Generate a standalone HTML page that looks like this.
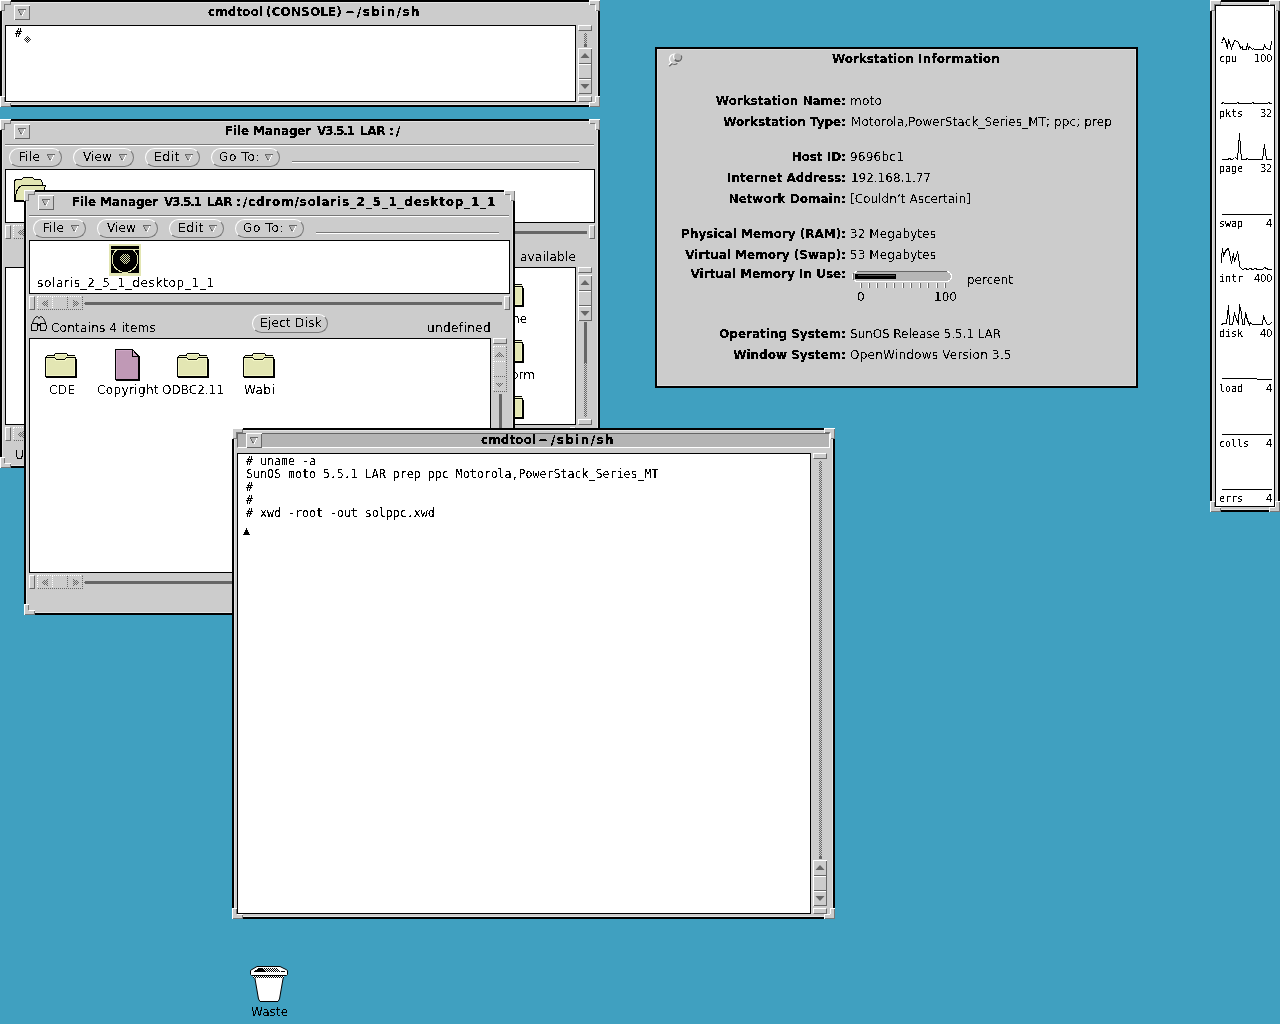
<!DOCTYPE html>
<html lang="en"><head><meta charset="utf-8"><title>OpenWindows desktop</title>
<style>
html,body{margin:0;padding:0}
body{width:1280px;height:1024px;overflow:hidden;position:relative;background:#40a0c0;font-family:"DejaVu Sans","Liberation Sans",sans-serif;font-size:12px;color:#000}
.abs,.t,.rc,.wbtn,.win,.pane,.raised,.mbtn,.sep,.act,.popup,.cable,.cable0,.elev,.elevd,.dcur{position:absolute}
.win{background:#ccc;box-shadow:inset 0 0 0 2px #000,inset 0 0 0 3px #e4e4e4;overflow:hidden}
.popup{background:#ccc;box-shadow:inset 0 0 0 2px #000,inset 0 0 0 3px #dcdcdc;overflow:hidden}
.wbtn{left:14px;top:5px}
.act{background:#b4b4b4;box-sizing:border-box;border:1px solid;border-color:#666 #fff #fff #666}
.pane{background:#fff;border:1px solid #000;overflow:hidden}
.raised{background:#ccc;box-sizing:border-box;border:1px solid;border-color:#fff #666 #666 #fff}
.mbtn{background:#ccc;border:1px solid;border-color:#fff #777 #777 #fff;border-radius:10px}
.sep{height:0;border-top:1px solid #777;border-bottom:1px solid #fff}
.t{white-space:pre;line-height:14px;font-size:12px;filter:url(#th)}
.t.b{font-weight:bold;filter:url(#thb)}
.t.m{font-family:"DejaVu Sans Mono","Liberation Mono",monospace;font-size:11.627px;line-height:13px;filter:url(#thm)}
.t.p{font-family:"DejaVu Sans Mono","Liberation Mono",monospace;font-size:9.966px;line-height:12px;filter:url(#thb)}
.t.pn{font-size:10px;line-height:12px;letter-spacing:-0.36px}
.t.r{text-align:right}
.cable{background:repeating-conic-gradient(#666 0 25%,#ccc 0 50%) 0 0/2px 2px}
.cable0{background:#666}
.elevd{box-sizing:border-box;border:1px dotted;border-color:#fff #666 #666 #fff;background:#ccc}
.dcur{width:7px;height:7px;background:repeating-conic-gradient(#000 0 25%,#fff 0 50%) 0 0/2px 2px;clip-path:polygon(50% 0,100% 50%,50% 100%,0 50%)}
svg{shape-rendering:crispEdges;overflow:visible}
</style></head>
<body>
<svg width="0" height="0" style="position:absolute"><defs><filter id="th" x="0" y="0" width="100%" height="100%" color-interpolation-filters="sRGB"><feComponentTransfer><feFuncA type="discrete" tableValues="0 0 0 1 1 1"/></feComponentTransfer></filter><filter id="thb" x="0" y="0" width="100%" height="100%" color-interpolation-filters="sRGB"><feComponentTransfer><feFuncA type="discrete" tableValues="0 0 1 1 1"/></feComponentTransfer></filter><filter id="thm" x="0" y="0" width="100%" height="100%" color-interpolation-filters="sRGB"><feComponentTransfer><feFuncA type="discrete" tableValues="0 0 0 0 0 0 0 0 0 1 1 1 1 1 1 1 1 1 1 1"/></feComponentTransfer></filter><pattern id="dg" width="2" height="2" patternUnits="userSpaceOnUse"><rect width="1" height="1" fill="#666"/><rect x="1" y="1" width="1" height="1" fill="#666"/></pattern></defs></svg>
<div class="win" style="left:0px;top:0px;width:600px;height:107px;z-index:1"><svg class="wbtn" width="16" height="15"><rect width="16" height="15" fill="#ccc"/><path d="M0.5 15V0.5H16" stroke="#fff" fill="none"/><path d="M15.5 1V14.5H1" stroke="#666" fill="none"/><path d="M4 4.5H11L7.5 10.5Z" fill="#b4b4b4"/><path d="M4 4.5H11.5M4.5 5L7.5 10.5" stroke="#666" fill="none"/><path d="M11 5.5L8 10.5" stroke="#fff" fill="none"/></svg><span id="t1" class="t b" style="left:208.00px;top:5px;letter-spacing:0.065px;">cmdtool</span><span id="t2" class="t b" style="left:266.00px;top:5px;letter-spacing:0.144px;">(CONSOLE)</span><span id="t3" class="t b" style="left:345.00px;top:5px;letter-spacing:-2.062px;">−</span><span id="t4" class="t b" style="left:357.00px;top:5px;letter-spacing:1.399px;">/sbin/sh</span><div class="pane" style="left:5px;top:25px;width:569px;height:75px;"><span id="t0" class="t m" style="left:9.00px;top:1px;">#</span><div class="dcur" style="left:18px;top:10px"></div></div><div class="abs" style="left:578px;top:25px;width:14px;height:77px"><div class="raised" style="left:0px;top:0px;width:14px;height:6px;"></div><div class="raised" style="left:0px;top:71px;width:14px;height:6px;"></div><div class="cable" style="left:6px;top:8px;width:3px;height:11px"></div><div class="abs" style="left:6px;top:19px;width:3px;height:3px;background:#666"></div><div class="elev" style="left:0;top:23px;width:14px;height:46px"><svg width="14" height="46" style="position:absolute;left:0;top:0"><rect width="14" height="46" fill="#ccc"/><path d="M0.5 46V0.5H14M1 16.5H13M1 31.5H13" stroke="#fff" fill="none"/><path d="M13.5 1V45.5H1M1 15.5H13M1 30.5H13" stroke="#666" fill="none"/><path d="M2.5 10H11.5L7 5Z" fill="#666" shape-rendering="auto"/><path d="M2.5 36H11.5L7 41Z" fill="#666" shape-rendering="auto"/></svg></div></div><svg class="rc" style="left:0;top:0" width="11" height="11"><path d="M0 0H11V5H5V11H0Z" fill="#ccc"/><path d="M0.5 11V0.5H11" stroke="#fff" fill="none"/><path d="M10.5 1V4.5H4.5V10.5H1" stroke="#777" fill="none"/></svg><svg class="rc" style="right:0;top:0" width="11" height="11"><path d="M0 0H11V11H6V5H0Z" fill="#ccc"/><path d="M0.5 5V0.5H11M6.5 5V11" stroke="#fff" fill="none"/><path d="M1 4.5H6M10.5 1V10.5H7" stroke="#777" fill="none"/></svg><svg class="rc" style="left:0;bottom:0" width="11" height="11"><path d="M0 0H5V6H11V11H0Z" fill="#ccc"/><path d="M0.5 11V0.5H5M5 6.5H11" stroke="#fff" fill="none"/><path d="M4.5 1V6M10.5 7V10.5H1" stroke="#777" fill="none"/></svg><svg class="rc" style="right:0;bottom:0" width="11" height="11"><path d="M6 0H11V11H0V6H6Z" fill="#ccc"/><path d="M6.5 6V0.5H11M0.5 11V6.5H6" stroke="#fff" fill="none"/><path d="M10.5 1V10.5H1" stroke="#777" fill="none"/></svg></div>
<div class="win" style="left:0px;top:119px;width:600px;height:349px;z-index:2"><svg class="wbtn" width="16" height="15"><rect width="16" height="15" fill="#ccc"/><path d="M0.5 15V0.5H16" stroke="#fff" fill="none"/><path d="M15.5 1V14.5H1" stroke="#666" fill="none"/><path d="M4 4.5H11L7.5 10.5Z" fill="#b4b4b4"/><path d="M4 4.5H11.5M4.5 5L7.5 10.5" stroke="#666" fill="none"/><path d="M11 5.5L8 10.5" stroke="#fff" fill="none"/></svg><span id="t13" class="t b" style="left:225.00px;top:5px;letter-spacing:-0.141px;">File</span><span id="t14" class="t b" style="left:253.00px;top:5px;letter-spacing:-0.190px;">Manager</span><span id="t15" class="t b" style="left:317.00px;top:5px;letter-spacing:-1.089px;">V3.5.1</span><span id="t16" class="t b" style="left:360.00px;top:5px;letter-spacing:-0.396px;">LAR</span><span id="t17" class="t b" style="left:389.00px;top:5px;letter-spacing:-0.812px;">:</span><span id="t18" class="t b" style="left:396.00px;top:5px;letter-spacing:3.609px;">/</span><div class="sep" style="left:5px;top:25px;width:589px"></div><div class="mbtn" style="left:9px;top:29px;width:51px;height:17px"><span id="t9" class="t s" style="left:9.00px;top:1px;letter-spacing:0.277px;">File</span><svg width="8" height="8" style="position:absolute;right:6px;top:5px"><path d="M0.5 0.5H7L3.75 6.5Z" fill="#b4b4b4"/><path d="M0 0.5H7.5M0.5 1L3.5 6.5" stroke="#666" fill="none"/><path d="M7 1.5L4 6.5" stroke="#fff" fill="none"/></svg></div><div class="mbtn" style="left:73px;top:29px;width:59px;height:17px"><span id="t10" class="t s" style="left:9.00px;top:1px;letter-spacing:0.129px;">View</span><svg width="8" height="8" style="position:absolute;right:6px;top:5px"><path d="M0.5 0.5H7L3.75 6.5Z" fill="#b4b4b4"/><path d="M0 0.5H7.5M0.5 1L3.5 6.5" stroke="#666" fill="none"/><path d="M7 1.5L4 6.5" stroke="#fff" fill="none"/></svg></div><div class="mbtn" style="left:145px;top:29px;width:53px;height:17px"><span id="t11" class="t s" style="left:8.00px;top:1px;letter-spacing:0.738px;">Edit</span><svg width="8" height="8" style="position:absolute;right:6px;top:5px"><path d="M0.5 0.5H7L3.75 6.5Z" fill="#b4b4b4"/><path d="M0 0.5H7.5M0.5 1L3.5 6.5" stroke="#666" fill="none"/><path d="M7 1.5L4 6.5" stroke="#fff" fill="none"/></svg></div><div class="mbtn" style="left:211px;top:29px;width:67px;height:17px"><span id="t12" class="t s" style="left:7.00px;top:1px;letter-spacing:0.670px;">Go To:</span><svg width="8" height="8" style="position:absolute;right:6px;top:5px"><path d="M0.5 0.5H7L3.75 6.5Z" fill="#b4b4b4"/><path d="M0 0.5H7.5M0.5 1L3.5 6.5" stroke="#666" fill="none"/><path d="M7 1.5L4 6.5" stroke="#fff" fill="none"/></svg></div><div class="sep" style="left:292px;top:42px;width:287px"></div><div class="pane" style="left:5px;top:50px;width:588px;height:52px;"><svg class="abs" style="left:8px;top:7px" width="32" height="25" viewBox="0 0 32 25"><path d="M0.5 24V4L2 2.5H7.5L9.5 0.5H18.5L20.5 2.5H26.5L28.5 5.5V9H6Z" fill="#e3e6b3" stroke="#000"/><path d="M7.5 8.5H31.5L27 24H1C1.5 14 4 10 7.5 8.5Z" fill="#e3e6b3" stroke="#000"/><path d="M0 24H27" stroke="#000" stroke-width="2"/></svg></div><div class="abs" style="left:5px;top:106px;width:590px;height:14px"><div class="raised" style="left:0px;top:0px;width:6px;height:14px;"></div><div class="raised" style="left:584px;top:0px;width:6px;height:14px;"></div><div class="elevd" style="left:8px;top:0;width:46px;height:14px"><svg width="46" height="14" style="position:absolute;left:-1px;top:-1px"><path d="M15.5 1V13" stroke="#fff" stroke-dasharray="1 1"/><path d="M30.5 1V13" stroke="#666" stroke-dasharray="1 1"/><path d="M11 2.5L5 7.5L11 12.5Z" fill="url(#dg)"/><path d="M36 2.500L42 7.500L36 12.500Z" fill="url(#dg)"/></svg></div><div class="abs" style="left:56px;top:6px;width:526px;height:3px;background:#666"></div><div class="abs" style="left:55px;top:7px;width:1px;height:1px;background:#666"></div></div><span id="t5" class="t s" style="left:520.00px;top:131px;letter-spacing:0.205px;">available</span><div class="pane" style="left:5px;top:148px;width:569px;height:156px;"><svg class="abs" style="left:486px;top:14px" width="32" height="25" viewBox="0 0 32 25"><path d="M1 24.5H32M31.5 6V25" stroke="#000" fill="none"/><path d="M0.5 5L2.5 2.5H9.5L10.5 0.5H21.5L22.5 2.5H29.5L30.5 5V23.5H0.5Z" fill="#e3e6b3" stroke="#000"/><path d="M2 3.5H10L11 1.5H21L22 3.5H30M1.5 6V22.5H29.5V6" stroke="#f3f6c6" fill="none"/><path d="M1 4.5H9.5L11.500 6.5H19.5L21.5 4.5H30" stroke="#000" fill="none"/><path d="M2 5.5H9L11 7.500H20L22 5.5H29" stroke="#f3f6c6" fill="none"/></svg><svg class="abs" style="left:486px;top:70px" width="32" height="25" viewBox="0 0 32 25"><path d="M1 24.5H32M31.5 6V25" stroke="#000" fill="none"/><path d="M0.5 5L2.5 2.5H9.5L10.5 0.5H21.5L22.5 2.5H29.5L30.5 5V23.5H0.5Z" fill="#e3e6b3" stroke="#000"/><path d="M2 3.5H10L11 1.5H21L22 3.5H30M1.5 6V22.5H29.5V6" stroke="#f3f6c6" fill="none"/><path d="M1 4.5H9.5L11.500 6.5H19.5L21.5 4.5H30" stroke="#000" fill="none"/><path d="M2 5.5H9L11 7.500H20L22 5.5H29" stroke="#f3f6c6" fill="none"/></svg><svg class="abs" style="left:486px;top:126px" width="32" height="25" viewBox="0 0 32 25"><path d="M1 24.5H32M31.5 6V25" stroke="#000" fill="none"/><path d="M0.5 5L2.5 2.5H9.5L10.5 0.5H21.5L22.5 2.5H29.5L30.5 5V23.5H0.5Z" fill="#e3e6b3" stroke="#000"/><path d="M2 3.5H10L11 1.5H21L22 3.5H30M1.5 6V22.5H29.5V6" stroke="#f3f6c6" fill="none"/><path d="M1 4.5H9.5L11.500 6.5H19.5L21.5 4.5H30" stroke="#000" fill="none"/><path d="M2 5.5H9L11 7.500H20L22 5.5H29" stroke="#f3f6c6" fill="none"/></svg><span id="t6" class="t s" style="left:487.00px;top:44px;">home</span><span id="t7" class="t s" style="left:478.00px;top:100px;">platform</span></div><div class="abs" style="left:578px;top:148px;width:14px;height:158px"><div class="raised" style="left:0px;top:0px;width:14px;height:6px;"></div><div class="raised" style="left:0px;top:152px;width:14px;height:6px;"></div><div class="cable" style="left:6px;top:55px;width:3px;height:95px"></div><div class="abs" style="left:6px;top:55px;width:3px;height:41px;background:#666"></div><div class="elev" style="left:0;top:8px;width:14px;height:46px"><svg width="14" height="46" style="position:absolute;left:0;top:0"><rect width="14" height="46" fill="#ccc"/><path d="M0.5 46V0.5H14M1 16.5H13M1 31.5H13" stroke="#fff" fill="none"/><path d="M13.5 1V45.5H1M1 15.5H13M1 30.5H13" stroke="#666" fill="none"/><path d="M2.5 10H11.5L7 5Z" fill="#666" shape-rendering="auto"/><path d="M2.5 36H11.5L7 41Z" fill="#666" shape-rendering="auto"/></svg></div></div><div class="abs" style="left:5px;top:308px;width:571px;height:14px"><div class="raised" style="left:0px;top:0px;width:6px;height:14px;"></div><div class="raised" style="left:565px;top:0px;width:6px;height:14px;"></div><div class="elevd" style="left:8px;top:0;width:46px;height:14px"><svg width="46" height="14" style="position:absolute;left:-1px;top:-1px"><path d="M15.5 1V13" stroke="#fff" stroke-dasharray="1 1"/><path d="M30.5 1V13" stroke="#666" stroke-dasharray="1 1"/><path d="M11 2.5L5 7.5L11 12.5Z" fill="url(#dg)"/><path d="M36 2.500L42 7.500L36 12.500Z" fill="url(#dg)"/></svg></div><div class="abs" style="left:56px;top:6px;width:507px;height:3px;background:#666"></div><div class="abs" style="left:55px;top:7px;width:1px;height:1px;background:#666"></div></div><span id="t8" class="t s" style="left:15.00px;top:329px;">Used</span><svg class="rc" style="left:0;top:0" width="11" height="11"><path d="M0 0H11V5H5V11H0Z" fill="#ccc"/><path d="M0.5 11V0.5H11" stroke="#fff" fill="none"/><path d="M10.5 1V4.5H4.5V10.5H1" stroke="#777" fill="none"/></svg><svg class="rc" style="right:0;top:0" width="11" height="11"><path d="M0 0H11V11H6V5H0Z" fill="#ccc"/><path d="M0.5 5V0.5H11M6.5 5V11" stroke="#fff" fill="none"/><path d="M1 4.5H6M10.5 1V10.5H7" stroke="#777" fill="none"/></svg><svg class="rc" style="left:0;bottom:0" width="11" height="11"><path d="M0 0H5V6H11V11H0Z" fill="#ccc"/><path d="M0.5 11V0.5H5M5 6.5H11" stroke="#fff" fill="none"/><path d="M4.5 1V6M10.5 7V10.5H1" stroke="#777" fill="none"/></svg><svg class="rc" style="right:0;bottom:0" width="11" height="11"><path d="M6 0H11V11H0V6H6Z" fill="#ccc"/><path d="M6.5 6V0.5H11M0.5 11V6.5H6" stroke="#fff" fill="none"/><path d="M10.5 1V10.5H1" stroke="#777" fill="none"/></svg></div>
<div class="win" style="left:24px;top:190px;width:491px;height:425px;z-index:3"><svg class="wbtn" width="16" height="15"><rect width="16" height="15" fill="#ccc"/><path d="M0.5 15V0.5H16" stroke="#fff" fill="none"/><path d="M15.5 1V14.5H1" stroke="#666" fill="none"/><path d="M4 4.5H11L7.5 10.5Z" fill="#b4b4b4"/><path d="M4 4.5H11.5M4.5 5L7.5 10.5" stroke="#666" fill="none"/><path d="M11 5.5L8 10.5" stroke="#fff" fill="none"/></svg><span id="t31" class="t b" style="left:48.00px;top:5px;letter-spacing:-0.141px;">File</span><span id="t32" class="t b" style="left:76.00px;top:5px;letter-spacing:-0.190px;">Manager</span><span id="t33" class="t b" style="left:140.00px;top:5px;letter-spacing:-1.089px;">V3.5.1</span><span id="t34" class="t b" style="left:183.00px;top:5px;letter-spacing:-0.396px;">LAR</span><span id="t35" class="t b" style="left:212.00px;top:5px;letter-spacing:-0.812px;">:</span><span id="t36" class="t b" style="left:219.00px;top:5px;letter-spacing:0.779px;">/cdrom/solaris_2_5_1_desktop_1_1</span><div class="sep" style="left:5px;top:25px;width:480px"></div><div class="mbtn" style="left:9px;top:29px;width:51px;height:17px"><span id="t27" class="t s" style="left:9.00px;top:1px;letter-spacing:0.277px;">File</span><svg width="8" height="8" style="position:absolute;right:6px;top:5px"><path d="M0.5 0.5H7L3.75 6.5Z" fill="#b4b4b4"/><path d="M0 0.5H7.5M0.5 1L3.5 6.5" stroke="#666" fill="none"/><path d="M7 1.5L4 6.5" stroke="#fff" fill="none"/></svg></div><div class="mbtn" style="left:73px;top:29px;width:59px;height:17px"><span id="t28" class="t s" style="left:9.00px;top:1px;letter-spacing:0.129px;">View</span><svg width="8" height="8" style="position:absolute;right:6px;top:5px"><path d="M0.5 0.5H7L3.75 6.5Z" fill="#b4b4b4"/><path d="M0 0.5H7.5M0.5 1L3.5 6.5" stroke="#666" fill="none"/><path d="M7 1.5L4 6.5" stroke="#fff" fill="none"/></svg></div><div class="mbtn" style="left:145px;top:29px;width:53px;height:17px"><span id="t29" class="t s" style="left:8.00px;top:1px;letter-spacing:0.738px;">Edit</span><svg width="8" height="8" style="position:absolute;right:6px;top:5px"><path d="M0.5 0.5H7L3.75 6.5Z" fill="#b4b4b4"/><path d="M0 0.5H7.5M0.5 1L3.5 6.5" stroke="#666" fill="none"/><path d="M7 1.5L4 6.5" stroke="#fff" fill="none"/></svg></div><div class="mbtn" style="left:211px;top:29px;width:67px;height:17px"><span id="t30" class="t s" style="left:7.00px;top:1px;letter-spacing:0.670px;">Go To:</span><svg width="8" height="8" style="position:absolute;right:6px;top:5px"><path d="M0.5 0.5H7L3.75 6.5Z" fill="#b4b4b4"/><path d="M0 0.5H7.5M0.5 1L3.5 6.5" stroke="#666" fill="none"/><path d="M7 1.5L4 6.5" stroke="#fff" fill="none"/></svg></div><div class="sep" style="left:292px;top:42px;width:183px"></div><div class="pane" style="left:5px;top:50px;width:479px;height:52px;"><svg class="abs" style="left:79px;top:3px" width="32" height="32" viewBox="0 0 32 32"><defs><pattern id="dz" width="2" height="2" patternUnits="userSpaceOnUse"><rect width="2" height="2" fill="#000"/><rect width="1" height="1" fill="#e3e6b3"/><rect x="1" y="1" width="1" height="1" fill="#e3e6b3"/></pattern><clipPath id="cdc"><rect x="2" y="6" width="28" height="23"/></clipPath></defs><rect width="32" height="32" fill="#e3e6b3"/><rect x="2" y="2" width="28" height="27" fill="#000"/><path d="M2 5.5H30" stroke="#e3e6b3"/><circle cx="16" cy="15.5" r="12.800" fill="none" stroke="#e3e6b3" stroke-width="1" clip-path="url(#cdc)"/><path d="M14 10H18L21 13V17L18 20H14L11 17V13Z" fill="url(#dz)"/></svg><span id="t19" class="t s" style="left:7.00px;top:35px;letter-spacing:0.681px;">solaris_2_5_1_desktop_1_1</span></div><div class="abs" style="left:5px;top:106px;width:481px;height:14px"><div class="raised" style="left:0px;top:0px;width:6px;height:14px;"></div><div class="raised" style="left:475px;top:0px;width:6px;height:14px;"></div><div class="elevd" style="left:8px;top:0;width:46px;height:14px"><svg width="46" height="14" style="position:absolute;left:-1px;top:-1px"><path d="M15.5 1V13" stroke="#fff" stroke-dasharray="1 1"/><path d="M30.5 1V13" stroke="#666" stroke-dasharray="1 1"/><path d="M11 2.5L5 7.5L11 12.5Z" fill="url(#dg)"/><path d="M36 2.500L42 7.500L36 12.500Z" fill="url(#dg)"/></svg></div><div class="abs" style="left:56px;top:6px;width:417px;height:3px;background:#666"></div><div class="abs" style="left:55px;top:7px;width:1px;height:1px;background:#666"></div></div><svg class="abs" style="left:7px;top:126px" width="16" height="15" viewBox="0 0 16 15"><path d="M1.5 7L2.500 4.500L3.500 2.500L5 1L6.500 0.500L7.500 1.500L8 2.500L8.500 1.500L9.500 0.500L11 1L12.500 2.500L13.500 4.500L14.500 7" stroke="#000" fill="none" shape-rendering="auto"/><rect x="0.5" y="7.500" width="6" height="7" rx="1.500" fill="none" stroke="#000"/><rect x="9" y="7.500" width="6" height="7" rx="1.500" fill="none" stroke="#000"/><rect x="6.5" y="8" width="3" height="2" fill="#000"/></svg><span id="t20" class="t s" style="left:27.00px;top:131px;letter-spacing:0.235px;">Contains 4 items</span><div class="mbtn" style="left:228px;top:124px;width:74px;height:17px"><span id="t21" class="t s" style="left:7.00px;top:1px;letter-spacing:0.280px;">Eject Disk</span></div><span id="t22" class="t s" style="left:403.00px;top:131px;letter-spacing:0.404px;">undefined</span><div class="pane" style="left:5px;top:148px;width:460px;height:233px;"><svg class="abs" style="left:15px;top:14px" width="32" height="25" viewBox="0 0 32 25"><path d="M1 24.5H32M31.5 6V25" stroke="#000" fill="none"/><path d="M0.5 5L2.5 2.5H9.5L10.5 0.5H21.5L22.5 2.5H29.5L30.5 5V23.5H0.5Z" fill="#e3e6b3" stroke="#000"/><path d="M2 3.5H10L11 1.5H21L22 3.5H30M1.5 6V22.5H29.5V6" stroke="#f3f6c6" fill="none"/><path d="M1 4.5H9.5L11.500 6.5H19.5L21.5 4.5H30" stroke="#000" fill="none"/><path d="M2 5.5H9L11 7.500H20L22 5.5H29" stroke="#f3f6c6" fill="none"/></svg><svg class="abs" style="left:85px;top:10px" width="25" height="32" viewBox="0 0 25 32"><path d="M1 31.5H25M24.5 7V32" stroke="#000" fill="none"/><path d="M0.5 0.5H17.5L23.5 6.5V30.5H0.5Z" fill="#c099b6" stroke="#000"/><path d="M1.5 29.5V1.5H17" stroke="#cfa8c6" fill="none"/><path d="M17.5 0.5V7.5H23.5Z" stroke="#000" fill="#d3aaca"/></svg><svg class="abs" style="left:147px;top:14px" width="32" height="25" viewBox="0 0 32 25"><path d="M1 24.5H32M31.5 6V25" stroke="#000" fill="none"/><path d="M0.5 5L2.5 2.5H9.5L10.5 0.5H21.5L22.5 2.5H29.5L30.5 5V23.5H0.5Z" fill="#e3e6b3" stroke="#000"/><path d="M2 3.5H10L11 1.5H21L22 3.5H30M1.5 6V22.5H29.5V6" stroke="#f3f6c6" fill="none"/><path d="M1 4.5H9.5L11.500 6.5H19.5L21.5 4.5H30" stroke="#000" fill="none"/><path d="M2 5.5H9L11 7.500H20L22 5.5H29" stroke="#f3f6c6" fill="none"/></svg><svg class="abs" style="left:213px;top:14px" width="32" height="25" viewBox="0 0 32 25"><path d="M1 24.5H32M31.5 6V25" stroke="#000" fill="none"/><path d="M0.5 5L2.5 2.5H9.5L10.5 0.5H21.5L22.5 2.5H29.5L30.5 5V23.5H0.5Z" fill="#e3e6b3" stroke="#000"/><path d="M2 3.5H10L11 1.5H21L22 3.5H30M1.5 6V22.5H29.5V6" stroke="#f3f6c6" fill="none"/><path d="M1 4.5H9.5L11.500 6.5H19.5L21.5 4.5H30" stroke="#000" fill="none"/><path d="M2 5.5H9L11 7.500H20L22 5.5H29" stroke="#f3f6c6" fill="none"/></svg><span id="t23" class="t s" style="left:19.00px;top:44px;letter-spacing:0.382px;">CDE</span><span id="t24" class="t s" style="left:67.00px;top:44px;letter-spacing:0.374px;">Copyright</span><span id="t25" class="t s" style="left:132.00px;top:44px;letter-spacing:0.027px;">ODBC2.11</span><span id="t26" class="t s" style="left:214.00px;top:44px;letter-spacing:0.448px;">Wabi</span></div><div class="abs" style="left:469px;top:148px;width:14px;height:235px"><div class="raised" style="left:0px;top:0px;width:14px;height:6px;"></div><div class="raised" style="left:0px;top:229px;width:14px;height:6px;"></div><div class="abs" style="left:6px;top:56px;width:3px;height:171px;background:#666"></div><div class="elevd" style="left:0;top:8px;width:14px;height:46px"><svg width="14" height="46" style="position:absolute;left:-1px;top:-1px"><path d="M1 15.5H13" stroke="#fff" stroke-dasharray="1 1"/><path d="M1 30.5H13" stroke="#666" stroke-dasharray="1 1"/><path d="M2.5 10.500L7 5.500L11.500 10.500Z" fill="url(#dg)"/><path d="M2.5 36.500L7 41.500L11.500 36.500Z" fill="url(#dg)"/></svg></div></div><div class="abs" style="left:5px;top:385px;width:481px;height:14px"><div class="raised" style="left:0px;top:0px;width:6px;height:14px;"></div><div class="raised" style="left:475px;top:0px;width:6px;height:14px;"></div><div class="elevd" style="left:8px;top:0;width:46px;height:14px"><svg width="46" height="14" style="position:absolute;left:-1px;top:-1px"><path d="M15.5 1V13" stroke="#fff" stroke-dasharray="1 1"/><path d="M30.5 1V13" stroke="#666" stroke-dasharray="1 1"/><path d="M11 2.5L5 7.5L11 12.5Z" fill="url(#dg)"/><path d="M36 2.500L42 7.500L36 12.500Z" fill="url(#dg)"/></svg></div><div class="abs" style="left:56px;top:6px;width:417px;height:3px;background:#666"></div><div class="abs" style="left:55px;top:7px;width:1px;height:1px;background:#666"></div></div><svg class="rc" style="left:0;top:0" width="11" height="11"><path d="M0 0H11V5H5V11H0Z" fill="#ccc"/><path d="M0.5 11V0.5H11" stroke="#fff" fill="none"/><path d="M10.5 1V4.5H4.5V10.5H1" stroke="#777" fill="none"/></svg><svg class="rc" style="right:0;top:0" width="11" height="11"><path d="M0 0H11V11H6V5H0Z" fill="#ccc"/><path d="M0.5 5V0.5H11M6.5 5V11" stroke="#fff" fill="none"/><path d="M1 4.5H6M10.5 1V10.5H7" stroke="#777" fill="none"/></svg><svg class="rc" style="left:0;bottom:0" width="11" height="11"><path d="M0 0H5V6H11V11H0Z" fill="#ccc"/><path d="M0.5 11V0.5H5M5 6.5H11" stroke="#fff" fill="none"/><path d="M4.5 1V6M10.5 7V10.5H1" stroke="#777" fill="none"/></svg><svg class="rc" style="right:0;bottom:0" width="11" height="11"><path d="M6 0H11V11H0V6H6Z" fill="#ccc"/><path d="M6.5 6V0.5H11M0.5 11V6.5H6" stroke="#fff" fill="none"/><path d="M10.5 1V10.5H1" stroke="#777" fill="none"/></svg></div>
<div class="win" style="left:232px;top:428px;width:603px;height:491px;z-index:4"><div class="act" style="left:5px;top:5px;width:593px;height:15px"></div><svg class="wbtn" width="16" height="15"><rect width="16" height="15" fill="#ccc"/><path d="M0.5 15V0.5H16" stroke="#fff" fill="none"/><path d="M15.5 1V14.5H1" stroke="#666" fill="none"/><path d="M4 4.5H11L7.5 10.5Z" fill="#b4b4b4"/><path d="M4 4.5H11.5M4.5 5L7.5 10.5" stroke="#666" fill="none"/><path d="M11 5.5L8 10.5" stroke="#fff" fill="none"/></svg><span id="t42" class="t b" style="left:249.00px;top:5px;letter-spacing:0.065px;">cmdtool</span><span id="t43" class="t b" style="left:306.00px;top:5px;letter-spacing:-1.062px;">−</span><span id="t44" class="t b" style="left:319.00px;top:5px;letter-spacing:1.399px;">/sbin/sh</span><div class="pane" style="left:5px;top:25px;width:572px;height:459px;"><span id="t37" class="t m" style="left:8.00px;top:1px;"># uname -a</span><span id="t38" class="t m" style="left:8.00px;top:14px;">SunOS moto 5.5.1 LAR prep ppc Motorola,PowerStack_Series_MT</span><span id="t39" class="t m" style="left:8.00px;top:27px;">#</span><span id="t40" class="t m" style="left:8.00px;top:40px;">#</span><span id="t41" class="t m" style="left:8.00px;top:53px;"># xwd -root -out solppc.xwd</span><svg class="abs" style="left:5px;top:74px" width="7" height="8"><path d="M3.5 0L7 7H0Z" fill="#000"/></svg></div><div class="abs" style="left:581px;top:25px;width:14px;height:461px"><div class="raised" style="left:0px;top:0px;width:14px;height:6px;"></div><div class="raised" style="left:0px;top:455px;width:14px;height:6px;"></div><div class="cable" style="left:6px;top:8px;width:3px;height:395px"></div><div class="abs" style="left:6px;top:403px;width:3px;height:3px;background:#666"></div><div class="elev" style="left:0;top:407px;width:14px;height:46px"><svg width="14" height="46" style="position:absolute;left:0;top:0"><rect width="14" height="46" fill="#ccc"/><path d="M0.5 46V0.5H14M1 16.5H13M1 31.5H13" stroke="#fff" fill="none"/><path d="M13.5 1V45.5H1M1 15.5H13M1 30.5H13" stroke="#666" fill="none"/><path d="M2.5 10H11.5L7 5Z" fill="#666" shape-rendering="auto"/><path d="M2.5 36H11.5L7 41Z" fill="#666" shape-rendering="auto"/></svg></div></div><svg class="rc" style="left:0;top:0" width="11" height="11"><path d="M0 0H11V5H5V11H0Z" fill="#ccc"/><path d="M0.5 11V0.5H11" stroke="#fff" fill="none"/><path d="M10.5 1V4.5H4.5V10.5H1" stroke="#777" fill="none"/></svg><svg class="rc" style="right:0;top:0" width="11" height="11"><path d="M0 0H11V11H6V5H0Z" fill="#ccc"/><path d="M0.5 5V0.5H11M6.5 5V11" stroke="#fff" fill="none"/><path d="M1 4.5H6M10.5 1V10.5H7" stroke="#777" fill="none"/></svg><svg class="rc" style="left:0;bottom:0" width="11" height="11"><path d="M0 0H5V6H11V11H0Z" fill="#ccc"/><path d="M0.5 11V0.5H5M5 6.5H11" stroke="#fff" fill="none"/><path d="M4.5 1V6M10.5 7V10.5H1" stroke="#777" fill="none"/></svg><svg class="rc" style="right:0;bottom:0" width="11" height="11"><path d="M6 0H11V11H0V6H6Z" fill="#ccc"/><path d="M6.5 6V0.5H11M0.5 11V6.5H6" stroke="#fff" fill="none"/><path d="M10.5 1V10.5H1" stroke="#777" fill="none"/></svg></div>
<div class="popup" style="left:655px;top:47px;width:483px;height:341px;z-index:1"><svg class="abs" style="left:13px;top:5px;shape-rendering:auto" width="16" height="15" viewBox="0 0 16 15"><circle cx="6.5" cy="7" r="5" fill="#ccc" stroke="#fff" stroke-width="1.2"/><circle cx="9.5" cy="5.300" r="3.800" fill="#b6b6b6"/><path d="M13.3 3.500A4 4 0 0 1 10.500 9.300" stroke="#666" stroke-width="1.2" fill="none"/><path d="M6.8 7.500Q8.500 9.800 11 9" stroke="#666" stroke-width="2" fill="none"/><path d="M6 2.300A5 5 0 0 0 6.500 7.500" stroke="#fff" stroke-width="1.200" fill="none"/><path d="M3 10.500L0.800 13" stroke="#fff" stroke-width="1.200"/><path d="M4.300 11.500L1.300 14.300M4.300 11.800Q7 13.300 9.500 11.300" stroke="#666" stroke-width="1.200" fill="none"/></svg><span id="t45" class="t b" style="left:177.00px;top:5px;letter-spacing:-0.053px;">Workstation</span><span id="t46" class="t b" style="left:263.00px;top:5px;letter-spacing:0.214px;">Information</span><span class="t b r" style="right:292px;top:47px">Workstation Name:</span><span id="t47" class="t s" style="left:195.00px;top:47px;letter-spacing:0.280px;">moto</span><span class="t b r" style="right:292px;top:68px">Workstation Type:</span><span id="t48" class="t s" style="left:196.00px;top:68px;letter-spacing:0.093px;">Motorola,PowerStack_Series_MT; ppc; prep</span><span class="t b r" style="right:292px;top:103px">Host ID:</span><span id="t49" class="t s" style="left:195.00px;top:103px;letter-spacing:0.237px;">9696bc1</span><span class="t b r" style="right:292px;top:124px">Internet Address:</span><span id="t50" class="t s" style="left:196.00px;top:124px;letter-spacing:-0.014px;">192.168.1.77</span><span class="t b r" style="right:292px;top:145px">Network Domain:</span><span id="t51" class="t s" style="left:195.00px;top:145px;letter-spacing:0.049px;">[Couldn’t Ascertain]</span><span class="t b r" style="right:292px;top:180px">Physical Memory (RAM):</span><span id="t52" class="t s" style="left:195.00px;top:180px;letter-spacing:0.094px;">32 Megabytes</span><span class="t b r" style="right:292px;top:201px">Virtual Memory (Swap):</span><span id="t53" class="t s" style="left:195.00px;top:201px;letter-spacing:0.094px;">53 Megabytes</span><span class="t b r" style="right:292px;top:220px">Virtual Memory In Use:</span><span class="t b r" style="right:292px;top:280px">Operating System:</span><span id="t54" class="t s" style="left:195.00px;top:280px;letter-spacing:-0.058px;">SunOS Release 5.5.1 LAR</span><span class="t b r" style="right:292px;top:301px">Window System:</span><span id="t55" class="t s" style="left:195.00px;top:301px;letter-spacing:0.236px;">OpenWindows Version 3.5</span><svg class="abs" style="left:197px;top:224px" width="104" height="24" viewBox="0 0 104 24"><rect x="0.5" y="0.5" width="99" height="10" rx="5" fill="#b6b6b6" stroke="#fff"/><path d="M5 0.500H95" stroke="#666"/><path d="M2 2.5Q0.500 5.500 2 8.500" stroke="#666" fill="none"/><rect x="3" y="3" width="41" height="5" rx="1.5" fill="#000"/><path d="M6 4.500H43" stroke="#555"/><path d="M8.5 12V17" stroke="#fff"/><path d="M9.5 12V17" stroke="#666"/><path d="M16.5 12V17" stroke="#fff"/><path d="M17.5 12V17" stroke="#666"/><path d="M24.5 12V17" stroke="#fff"/><path d="M25.5 12V17" stroke="#666"/><path d="M33.5 12V17" stroke="#fff"/><path d="M34.5 12V17" stroke="#666"/><path d="M41.5 12V17" stroke="#fff"/><path d="M42.5 12V17" stroke="#666"/><path d="M50.5 12V17" stroke="#fff"/><path d="M51.5 12V17" stroke="#666"/><path d="M58.5 12V17" stroke="#fff"/><path d="M59.5 12V17" stroke="#666"/><path d="M67.5 12V17" stroke="#fff"/><path d="M68.5 12V17" stroke="#666"/><path d="M75.5 12V17" stroke="#fff"/><path d="M76.5 12V17" stroke="#666"/><path d="M84.5 12V17" stroke="#fff"/><path d="M85.5 12V17" stroke="#666"/><path d="M92.5 12V17" stroke="#fff"/><path d="M93.5 12V17" stroke="#666"/></svg><span id="t56" class="t s" style="left:312.00px;top:226px;">percent</span><span id="t57" class="t s" style="left:202.00px;top:243px;">0</span><span id="t58" class="t s" style="left:279.00px;top:243px;">100</span></div>
<div class="win" style="left:1210px;top:0px;width:70px;height:512px;z-index:1"><div class="pane" style="left:5px;top:5px;width:58px;height:500px;"><svg class="abs" style="left:5px;top:4px" width="51" height="40" viewBox="0 0 51 40"><path d="M0.5 33.5 L1.5 31.5 L2.5 27.5 L4.5 30.5 L6.5 38.5 L7.5 29.5 L10.5 38.5 L13.5 30.5 L16.5 31.5 L18.5 34.5 L19.5 38.5 L21.5 36.5 L21.5 39.5 L25.5 39.5 L26.5 33.5 L27.5 39.5 L28.5 36.5 L31.5 39.5 L32.5 38.5 L33.5 39.5 L42.5 39.5 L43.5 35.5 L44.5 37.5 L47.5 39.5 L49.5 39.5 L50.5 31.5" stroke="#000" fill="none" stroke-width="1" shape-rendering="crispEdges"/></svg><span id="t59" class="t p" style="left:3.00px;top:47px;">cpu</span><span class="t pn r" style="right:2px;top:47px">100</span><svg class="abs" style="left:5px;top:59px" width="51" height="40" viewBox="0 0 51 40"><path d="M0.5 38.5 L2.5 37.5 L3.5 38.5 L15.5 38.5 L16.5 37.5 L18.5 38.5 L30.5 38.5 L31.5 37.5 L33.5 38.5 L46.5 38.5 L47.5 37.5 L49.5 38.5 L50.5 38.5" stroke="#000" fill="none" stroke-width="1" shape-rendering="crispEdges"/></svg><span id="t60" class="t p" style="left:3.00px;top:102px;">pkts</span><span class="t pn r" style="right:2px;top:102px">32</span><svg class="abs" style="left:5px;top:114px" width="51" height="40" viewBox="0 0 51 40"><path d="M0.5 39.5 L6.5 39.5 L8.5 38.5 L10.5 39.5 L13.5 38.5 L14.5 37.5 L16.5 39.5 L17.5 27.5 L18.5 13.5 L19.5 27.5 L20.5 39.5 L24.5 39.5 L26.5 38.5 L27.5 39.5 L41.5 39.5 L42.5 32.5 L43.5 24.5 L44.5 32.5 L45.5 39.5 L50.5 39.5" stroke="#000" fill="none" stroke-width="1" shape-rendering="crispEdges"/></svg><span id="t61" class="t p" style="left:3.00px;top:157px;">page</span><span class="t pn r" style="right:2px;top:157px">32</span><svg class="abs" style="left:5px;top:169px" width="51" height="40" viewBox="0 0 51 40"><path d="M0.5 39.5 L50.5 39.5" stroke="#000" fill="none" stroke-width="1" shape-rendering="crispEdges"/></svg><span id="t62" class="t p" style="left:3.00px;top:212px;">swap</span><span class="t pn r" style="right:2px;top:212px">4</span><svg class="abs" style="left:5px;top:224px" width="51" height="40" viewBox="0 0 51 40"><path d="M0.5 32.5 L0.5 27.5 L1.5 18.5 L2.5 25.5 L5.5 19.5 L7.5 18.5 L10.5 33.5 L12.5 23.5 L13.5 31.5 L16.5 22.5 L17.5 25.5 L18.5 36.5 L21.5 39.5 L24.5 38.5 L26.5 39.5 L29.5 38.5 L31.5 39.5 L34.5 38.5 L36.5 39.5 L41.5 39.5 L43.5 37.5 L45.5 38.5 L47.5 39.5 L50.5 39.5" stroke="#000" fill="none" stroke-width="1" shape-rendering="crispEdges"/></svg><span id="t63" class="t p" style="left:3.00px;top:267px;">intr</span><span class="t pn r" style="right:2px;top:267px">400</span><svg class="abs" style="left:5px;top:279px" width="51" height="40" viewBox="0 0 51 40"><path d="M0.5 39.5 L2.5 38.5 L5.5 38.5 L6.5 30.5 L7.5 20.5 L8.5 39.5 L11.5 39.5 L13.5 28.5 L17.5 39.5 L18.5 19.5 L20.5 28.5 L21.5 39.5 L23.5 39.5 L24.5 27.5 L26.5 35.5 L28.5 39.5 L29.5 37.5 L31.5 39.5 L41.5 39.5 L42.5 30.5 L44.5 36.5 L46.5 39.5 L48.5 39.5 L50.5 37.5" stroke="#000" fill="none" stroke-width="1" shape-rendering="crispEdges"/></svg><span id="t64" class="t p" style="left:3.00px;top:322px;">disk</span><span class="t pn r" style="right:2px;top:322px">40</span><svg class="abs" style="left:5px;top:334px" width="51" height="40" viewBox="0 0 51 40"><path d="M0.5 38.5 L35.5 38.5 L36.5 39.5 L50.5 39.5" stroke="#000" fill="none" stroke-width="1" shape-rendering="crispEdges"/></svg><span id="t65" class="t p" style="left:3.00px;top:377px;">load</span><span class="t pn r" style="right:2px;top:377px">4</span><svg class="abs" style="left:5px;top:389px" width="51" height="40" viewBox="0 0 51 40"><path d="M0.5 39.5 L50.5 39.5" stroke="#000" fill="none" stroke-width="1" shape-rendering="crispEdges"/></svg><span id="t66" class="t p" style="left:3.00px;top:432px;">colls</span><span class="t pn r" style="right:2px;top:432px">4</span><svg class="abs" style="left:5px;top:444px" width="51" height="40" viewBox="0 0 51 40"><path d="M0.5 39.5 L50.5 39.5" stroke="#000" fill="none" stroke-width="1" shape-rendering="crispEdges"/></svg><span id="t67" class="t p" style="left:3.00px;top:487px;">errs</span><span class="t pn r" style="right:2px;top:487px">4</span></div><svg class="rc" style="left:0;top:0" width="11" height="11"><path d="M0 0H11V5H5V11H0Z" fill="#ccc"/><path d="M0.5 11V0.5H11" stroke="#fff" fill="none"/><path d="M10.5 1V4.5H4.5V10.5H1" stroke="#777" fill="none"/></svg><svg class="rc" style="right:0;top:0" width="11" height="11"><path d="M0 0H11V11H6V5H0Z" fill="#ccc"/><path d="M0.5 5V0.5H11M6.5 5V11" stroke="#fff" fill="none"/><path d="M1 4.5H6M10.5 1V10.5H7" stroke="#777" fill="none"/></svg><svg class="rc" style="left:0;bottom:0" width="11" height="11"><path d="M0 0H5V6H11V11H0Z" fill="#ccc"/><path d="M0.5 11V0.5H5M5 6.5H11" stroke="#fff" fill="none"/><path d="M4.5 1V6M10.5 7V10.5H1" stroke="#777" fill="none"/></svg><svg class="rc" style="right:0;bottom:0" width="11" height="11"><path d="M6 0H11V11H0V6H6Z" fill="#ccc"/><path d="M6.5 6V0.5H11M0.5 11V6.5H6" stroke="#fff" fill="none"/><path d="M10.5 1V10.5H1" stroke="#777" fill="none"/></svg></div>
<svg class="abs" style="left:250px;top:966px" width="38" height="36" viewBox="0 0 38 36"><defs><pattern id="dz2" width="2" height="2" patternUnits="userSpaceOnUse"><rect width="2" height="2" fill="#fff"/><rect width="1" height="1" fill="#000"/><rect x="1" y="1" width="1" height="1" fill="#000"/></pattern></defs><path d="M4.5 10L8.500 33L10 35.500H28L29.500 33L33.500 10Z" fill="#fff" stroke="#000" shape-rendering="auto"/><path d="M7 0.5H30L36 3.500L37.500 4.500V8.500L36.500 9.500H1.500L0.500 8.500V4.500L2 3.500Z" fill="#fff" stroke="#000" shape-rendering="auto"/><path d="M3 6L9 2H12L16 6Z" fill="#000"/><path d="M12 2H27L31 6H16Z" fill="url(#dz2)"/><path d="M31 5.500H35" stroke="#000"/><rect x="3" y="10" width="31" height="2" fill="url(#dz2)"/></svg>
<span id="t68" class="t s" style="left:251.00px;top:1005px;letter-spacing:0.066px;">Waste</span>
</body></html>
